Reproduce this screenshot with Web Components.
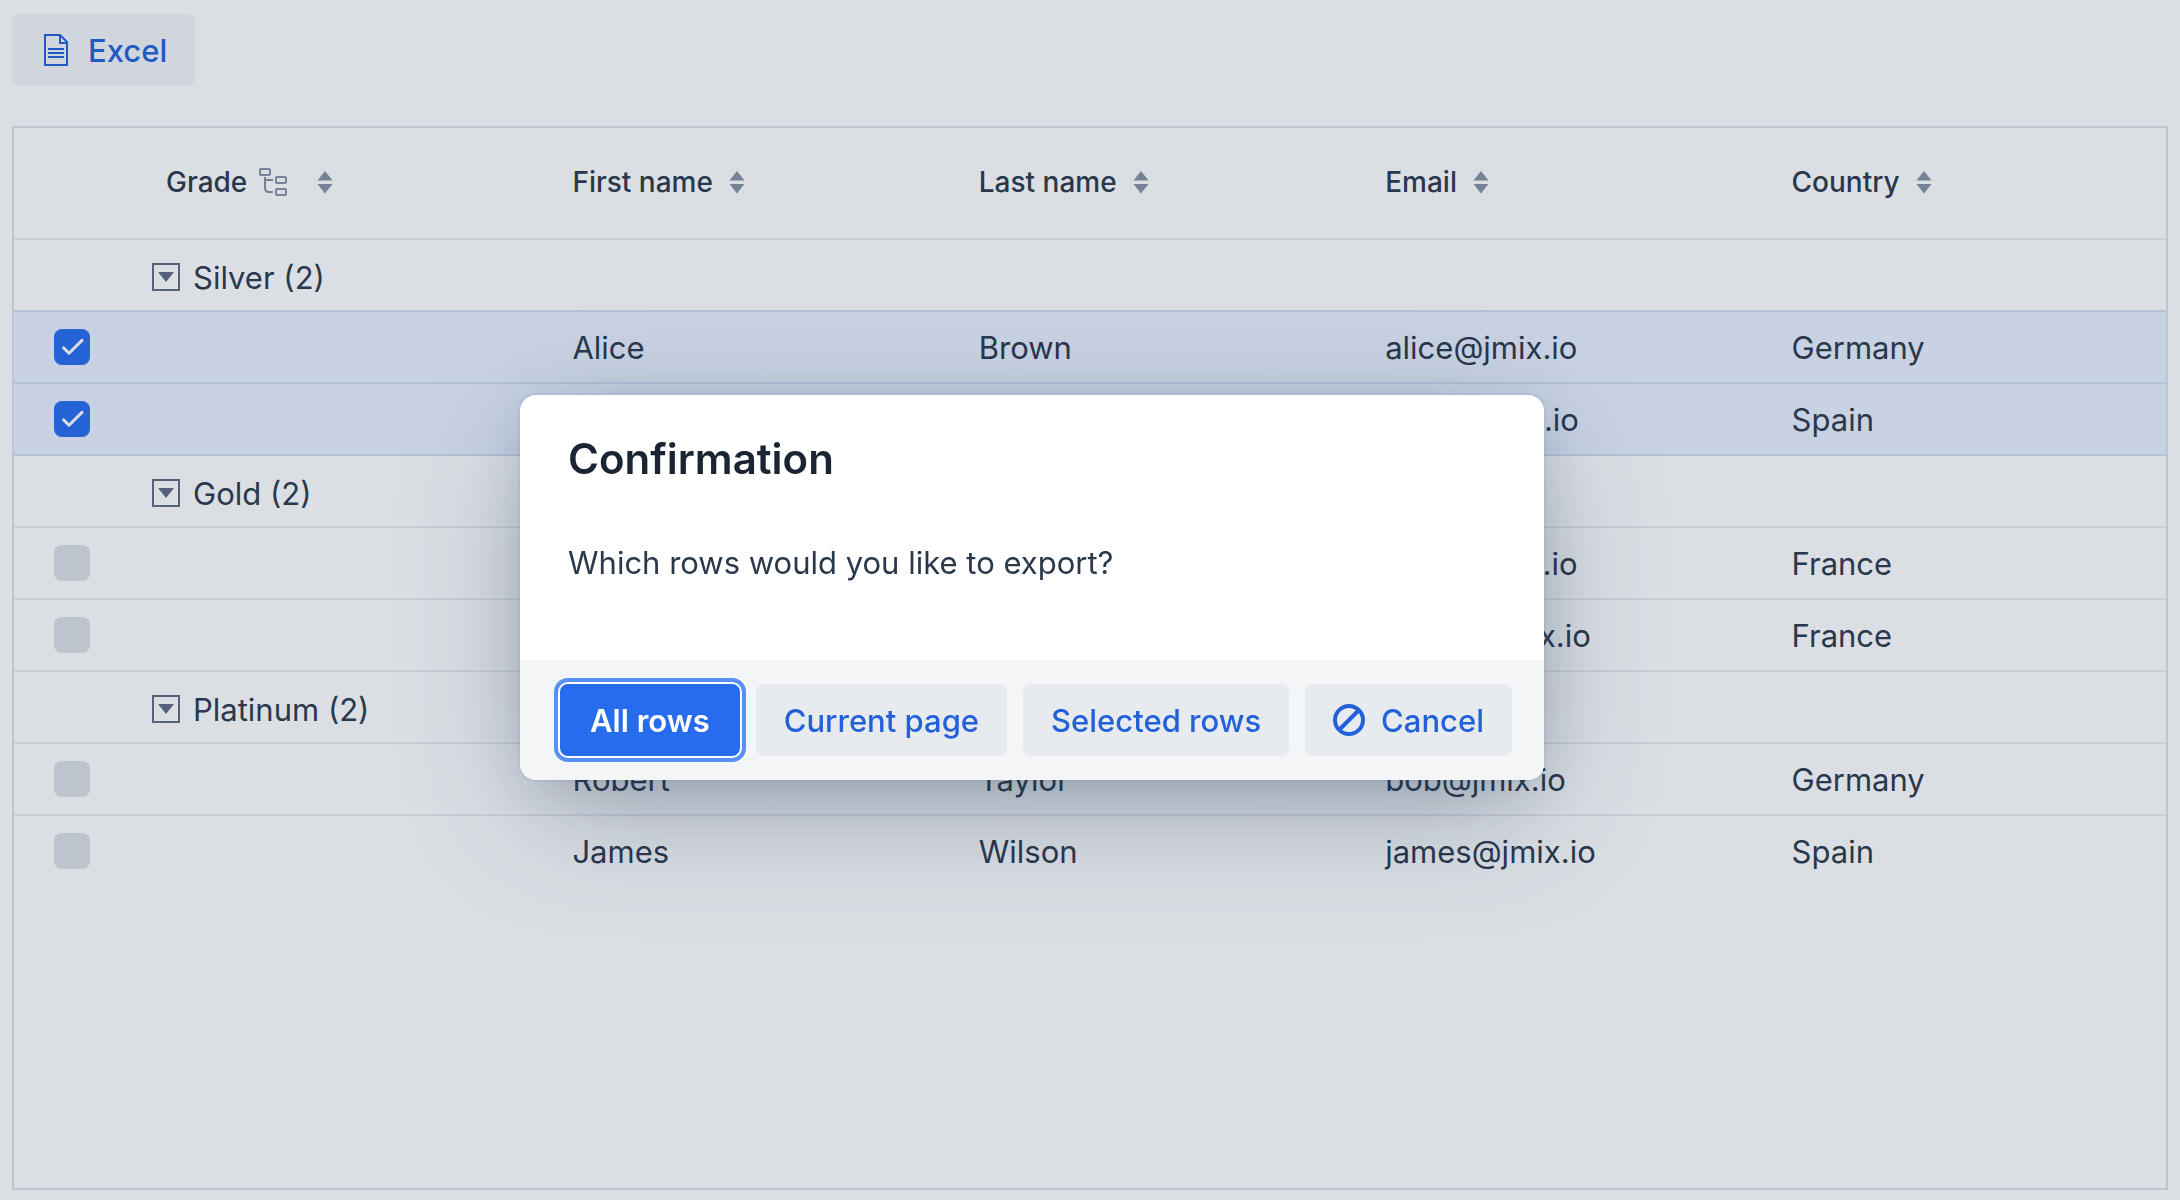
<!DOCTYPE html>
<html lang="en">
<head>
<meta charset="utf-8">
<title>Customers</title>
<style>
  html, body { height: 100%; margin: 0; }
  body {
    --primary: #276cec;
    --primary-text: #2261d8;
    --primary-10: #e9f0fd;
    --heading: #1a2433;
    --body-text: #2b384b;
    --secondary: #5f6c80;
    --tertiary: #8792a3;
    --shade-5: rgba(25, 59, 124, .05);
    --shade-20: rgba(28, 53, 90, .16);
    --shade-40: rgba(28, 49, 79, .38);
    background: #fff;
    color: var(--body-text);
    font-family: Inter, "Liberation Sans", sans-serif;
    font-size: 31px;
    line-height: 52px;
    overflow: hidden;
  }
</style>
</head>
<body>
<customer-view></customer-view>

<script>
const define = (name, html, setup) => {
  const template = document.createElement('template');
  template.innerHTML = html;
  customElements.define(name, class extends HTMLElement {
    constructor() {
      super();
      this.attachShadow({ mode: 'open' }).append(template.content.cloneNode(true));
    }
    connectedCallback() {
      if (setup) setup(this.shadowRoot, this);
    }
  });
};

define('ui-button', `
  <style>
    :host { display: inline-flex; }
    button {
      display: flex; align-items: center; gap: 16px;
      height: 72px; padding: 0 28px; border: 0; border-radius: 8px;
      background: var(--shade-5); color: var(--primary-text);
      font: inherit; font-weight: 500; white-space: nowrap;
    }
    span { padding-top: 2px; }
    ::slotted(svg) { display: block; flex: none; }
    :host([theme="primary"]) button {
      padding: 0 30px; background: var(--primary); color: #fff; font-weight: 600;
      box-shadow: 0 0 0 2px #fff, 0 0 0 6px #5890f4;
    }
  </style>
  <button type="button"><slot name="icon"></slot><span><slot></slot></span></button>
`);

define('ui-checkbox', `
  <style>
    :host { display: block; }
    label { display: grid; width: 36px; height: 36px; margin: 0 auto; }
    input, svg { grid-area: 1 / 1; width: 36px; height: 36px; margin: 0; }
    input { appearance: none; border-radius: 8px; background: #dbdfe4; }
    svg { display: none; pointer-events: none; }
    input:checked { background: var(--primary); }
    input:checked + svg { display: block; }
  </style>
  <label>
    <input type="checkbox" aria-label="Select row">
    <svg viewBox="0 0 36 36" fill="none" stroke="#fff" stroke-width="3" stroke-linecap="round" stroke-linejoin="round"><path d="M9.500 18.800 15 24.200 28 11.400"/></svg>
  </label>
`, (root, host) => { root.querySelector('input').checked = host.hasAttribute('checked'); });

define('sort-indicator', `
  <style>
    :host { display: block; color: var(--tertiary); }
    svg { display: block; }
  </style>
  <svg width="16" height="24" viewBox="0 0 16 24" fill="currentColor"><path d="M8 1 15.500 10.500H.5zM8 23.500.5 14h15z"/></svg>
`);

define('group-toggle', `
  <style>
    :host { display: flex; align-items: center; gap: 13px; }
    button {
      display: grid; place-items: center; flex: none;
      box-sizing: border-box; width: 28px; height: 28px; padding: 0;
      border: 2px solid var(--secondary); background: none; color: var(--secondary);
    }
    span { padding-top: 2px; }
  </style>
  <button type="button" aria-label="Collapse group" aria-expanded="true">
    <svg width="16" height="10" viewBox="0 0 16 10" fill="currentColor"><path d="M0 0h16L8 10z"/></svg>
  </button>
  <span><slot></slot></span>
`);

define('customer-grid', `
  <style>
    :host {
      display: block; box-sizing: border-box; overflow: hidden;
      border: 2px solid #dbe0e9;
    }
    table { width: 100%; table-layout: fixed; border-collapse: separate; border-spacing: 0; }
    .select { width: 120px; }
    th, td { box-sizing: border-box; padding: 0 32px; text-align: left; white-space: nowrap; }
    th { height: 110px; padding-bottom: 2px; font-size: 28px; font-weight: 500; }
    td { height: 72px; padding-top: 2px; border-top: 2px solid #e9ecf2; }
    th:first-child, td:first-child { padding: 0 4px 0 0; }
    th > div { display: flex; align-items: center; gap: 16px; }
    th .hierarchy { margin: 0 12px 0 -4px; color: var(--tertiary); }
    .group td:nth-child(2) { padding: 4px 18px 0; }
    .selected td { background: var(--primary-10); }
    .selected td, .selected + tr td { border-top-color: #d2def4; }
  </style>
  <table>
    <colgroup><col class="select"><col><col><col><col><col></colgroup>
    <thead><tr>
      <th></th>
      <th><div>Grade
        <svg class="hierarchy" width="30" height="28" viewBox="0 0 30 28" fill="none" stroke="currentColor" stroke-width="2">
          <rect x="1" y="1" width="10" height="6" rx="1"/><rect x="17" y="9" width="10" height="6" rx="1"/><rect x="17" y="21" width="10" height="6" rx="1"/>
          <path d="M6 9v11q0 4 4 4h4M6 12h8"/>
        </svg>
        <sort-indicator></sort-indicator></div></th>
      <th><div>First name<sort-indicator></sort-indicator></div></th>
      <th><div>Last name<sort-indicator></sort-indicator></div></th>
      <th><div>Email<sort-indicator></sort-indicator></div></th>
      <th><div>Country<sort-indicator></sort-indicator></div></th>
    </tr></thead>
    <tbody></tbody>
  </table>
`, root => {
  const groups = [
    ['Silver', [['Alice', 'Brown', 'alice@jmix.io', 'Germany', true], ['', '', 'linda@jmix.io', 'Spain', true]]],
    ['Gold', [['', '', 'louis@jmix.io', 'France'], ['', '', 'maria@jmix.io', 'France']]],
    ['Platinum', [['Robert', 'Taylor', 'bob@jmix.io', 'Germany'], ['James', 'Wilson', 'james@jmix.io', 'Spain']]],
  ];
  root.querySelector('tbody').innerHTML = groups.map(([grade, people]) => `
    <tr class="group"><td></td><td><group-toggle>${grade} (${people.length})</group-toggle></td><td></td><td></td><td></td><td></td></tr>
    ${people.map(([first, last, email, country, selected]) => `
      <tr class="${selected ? 'selected' : ''}">
        <td><ui-checkbox ${selected ? 'checked' : ''}></ui-checkbox></td><td></td>
        <td>${first}</td><td>${last}</td><td>${email}</td><td>${country}</td>
      </tr>`).join('')}`).join('');
});

define('confirm-dialog', `
  <style>
    :host {
      position: fixed; inset: 0; box-sizing: border-box;
      display: flex; align-items: center; justify-content: center;
      padding: 0 116px 25px 0;
      background: var(--shade-20);
    }
    dialog {
      position: static; box-sizing: border-box; width: 1024px; max-width: 100%;
      margin: 0; padding: 0; border: 0; border-radius: 16px; overflow: hidden;
      background: #fff; color: var(--body-text);
      box-shadow: 0 0 0 2px var(--shade-5), 0 8px 48px -6px var(--shade-20), 0 36px 128px -16px var(--shade-40);
    }
    h2 { margin: 0; padding: 36px 48px 0; color: var(--heading); font-size: 42px; line-height: 56px; font-weight: 600; }
    .content { padding: 50px 48px 71px; }
    footer { display: flex; justify-content: flex-end; gap: 16px; padding: 24px 32px; background: #f3f5f7; }
  </style>
  <dialog open aria-labelledby="title">
    <h2 id="title"><slot name="title"></slot></h2>
    <div class="content"><slot></slot></div>
    <footer><slot name="footer"></slot></footer>
  </dialog>
`);

define('customer-view', `
  <style>
    :host { display: flex; flex-direction: column; box-sizing: border-box; height: 100vh; padding: 14px 12px 10px; gap: 40px; }
    customer-grid { flex: 1; min-height: 0; }
  </style>
  <div>
    <ui-button>
      <svg slot="icon" width="32" height="32" viewBox="0 0 32 32" fill="none" stroke="currentColor" stroke-width="2"><path d="M5 1h15l7 7v23H5zM20 1v8h7M8 15h16M8 19h16M8 23h16"/></svg>
      Excel
    </ui-button>
  </div>
  <customer-grid></customer-grid>
  <confirm-dialog>
    <span slot="title">Confirmation</span>
    Which rows would you like to export?
    <ui-button slot="footer" theme="primary">All rows</ui-button>
    <ui-button slot="footer">Current page</ui-button>
    <ui-button slot="footer">Selected rows</ui-button>
    <ui-button slot="footer">
      <svg slot="icon" width="32" height="32" viewBox="0 0 32 32" fill="none" stroke="currentColor" stroke-width="4"><circle cx="16" cy="16" r="14"/><path d="M26 6 6 26"/></svg>
      Cancel
    </ui-button>
  </confirm-dialog>
`);
</script>
</body>
</html>
